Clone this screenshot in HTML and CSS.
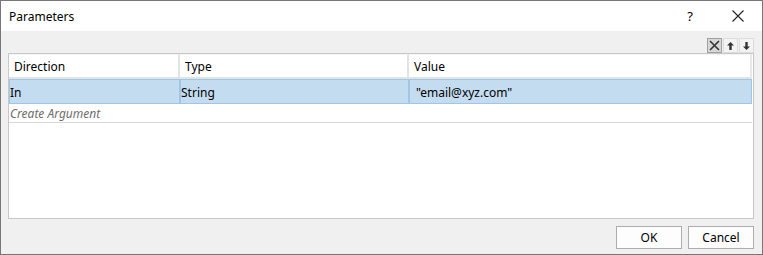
FILE: index.html
```html
<!DOCTYPE html>
<html lang="en">
<head>
    <meta charset="UTF-8">
    <title>Parameters</title>
    <link rel="stylesheet" href="styles.css">
</head>
<body>
    <div class="dialog">
        <div class="title-bar">
            <span class="title">Parameters</span>
            <span class="help">?</span>
            <span class="close">
                <svg width="12" height="12" viewBox="0 0 12 12"><path d="M0.5 0.5 L11.5 11.5 M11.5 0.5 L0.5 11.5" stroke="#222" stroke-width="1.1" fill="none"/></svg>
            </span>
        </div>
        <div class="content">
            <div class="toolbar">
                <span class="tool-btn active">
                    <svg width="11" height="11" viewBox="0 0 11 11"><path d="M1 1 L10 10 M10 1 L1 10" stroke="#333" stroke-width="1.6" fill="none"/></svg>
                </span>
                <span class="tool-btn">
                    <svg width="9" height="10" viewBox="0 0 9 10"><path d="M4.5 1 L1 4.5 H3.3 V9 H5.7 V4.5 H8 Z" fill="#333"/></svg>
                </span>
                <span class="tool-btn">
                    <svg width="9" height="10" viewBox="0 0 9 10"><path d="M4.5 9 L1 5.5 H3.3 V1 H5.7 V5.5 H8 Z" fill="#333"/></svg>
                </span>
            </div>
            <div class="grid">
                <table class="args">
                    <thead>
                        <tr>
                            <th class="col-dir">Direction</th>
                            <th class="col-type">Type</th>
                            <th class="col-val">Value</th>
                        </tr>
                    </thead>
                    <tbody>
                        <tr class="selected">
                            <td>In</td>
                            <td>String</td>
                            <td class="val">"email@xyz.com"</td>
                        </tr>
                        <tr class="create">
                            <td colspan="3">Create Argument</td>
                        </tr>
                    </tbody>
                </table>
            </div>
            <div class="buttons">
                <button class="btn">OK</button>
                <button class="btn">Cancel</button>
            </div>
        </div>
    </div>
</body>
</html>
```

FILE: styles.css
```css
html, body {
    margin: 0;
    padding: 0;
}

body {
    font-family: "Noto Sans", "Open Sans", sans-serif;
    font-size: 12px;
    color: #000;
    background: #fff;
}

.dialog {
    width: 763px;
    height: 255px;
    box-sizing: border-box;
    border: 1px solid #777;
    display: flex;
    flex-direction: column;
}

.title-bar {
    height: 30px;
    background: #fff;
    display: flex;
    align-items: center;
    padding-left: 8px;
}

.title {
    flex: 1;
    font-size: 12px;
}

.help {
    width: 46px;
    text-align: center;
    font-size: 13px;
    margin-right: 2px;
}

.close {
    width: 46px;
    height: 30px;
    display: flex;
    align-items: center;
    justify-content: center;
    margin-right: 1px;
}

.content {
    flex: 1;
    background: #f0f0f0;
    padding: 0 8px 0 7px;
    display: flex;
    flex-direction: column;
}

.toolbar {
    height: 22px;
    display: flex;
    justify-content: flex-end;
    align-items: flex-end;
    gap: 1px;
    padding-right: 0;
}

.tool-btn {
    width: 15px;
    height: 15px;
    box-sizing: border-box;
    border: 1px solid #dcdcdc;
    display: flex;
    align-items: center;
    justify-content: center;
    background: #f3f3f3;
}

.tool-btn.active {
    background: #d8d8d8;
    border-color: #a0a0a0;
}

.grid {
    height: 166px;
    box-sizing: border-box;
    border: 1px solid #c8c8c8;
    background: #fff;
}

.args {
    width: 743px;
    border-collapse: separate;
    border-spacing: 0;
    table-layout: fixed;
}

.args th {
    height: 21px;
    text-align: left;
    font-weight: normal;
    padding: 1px 0 0 5px;
    border-top: 1px solid #f4f4f4;
    border-right: 2px solid #e3e3e3;
    border-bottom: 2px solid #e3e3e3;
    background: #fff;
}

.args th.col-val {
    border-right-color: #e8e8e8;
}

.col-dir {
    width: 164px;
}

.col-type {
    width: 222px;
}

.selected td {
    height: 22px;
    background: #c4dcf0;
    border: 1px solid #9fc6e8;
    padding: 1px 0 0 0;
}

.selected td.val {
    padding-left: 6px;
}

.create td {
    height: 15px;
    font-style: italic;
    color: #6d6d6d;
    padding: 1px 0 0 1px;
    border-bottom: 1px solid #d8d8d8;
}

.buttons {
    flex: 1;
    display: flex;
    justify-content: flex-end;
    align-items: center;
    gap: 6px;
    padding-top: 2px;
}

.btn {
    width: 66px;
    height: 23px;
    font-family: "Noto Sans", "Open Sans", sans-serif;
    font-size: 12px;
    background: #fdfdfd;
    border: 1px solid #adadad;
    padding: 0;
    color: #000;
}
```
